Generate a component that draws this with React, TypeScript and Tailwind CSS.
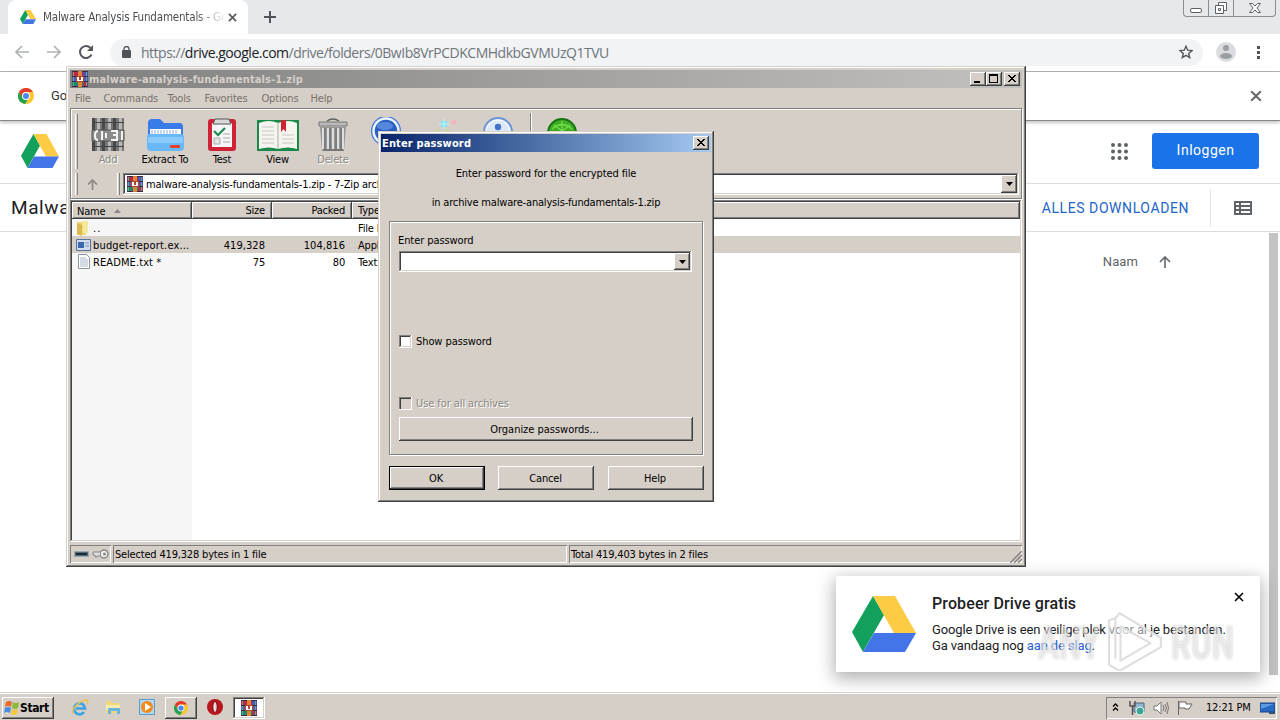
import type { ReactNode } from "react";

const ui = "font-['DejaVu_Sans_Condensed','DejaVu_Sans',sans-serif] [font-stretch:condensed] text-[11px] leading-[14px] tracking-[-0.18px] whitespace-nowrap";
const roboto = "font-['Roboto',sans-serif] whitespace-nowrap";
const frame = "bg-[#d6cfc8] shadow-[inset_-1px_-1px_#404040,inset_1px_1px_#d6cfc8,inset_-2px_-2px_#808080,inset_2px_2px_#fff]";
const raised = "bg-[#d6cfc8] shadow-[inset_-1px_-1px_#404040,inset_1px_1px_#fff,inset_-2px_-2px_#808080]";
const sunken = "bg-white shadow-[inset_-1px_-1px_#fff,inset_1px_1px_#808080,inset_-2px_-2px_#d6cfc8,inset_2px_2px_#404040]";
const thinSunken = "shadow-[inset_1px_1px_#808080,inset_-1px_-1px_#fff]";

function DriveLogo({ className }: { className: string }) {
  return (
    <svg className={className} viewBox="0 0 64 56" preserveAspectRatio="none">
      <path d="M21 0L0 36l11 20 21-37z" fill="#12a05c" />
      <path d="M21 0h22l21 37H42z" fill="#fdcc44" />
      <path d="M22 37h42L53 56H11z" fill="#4374e8" />
    </svg>
  );
}

function ChromeLogo({ className }: { className: string }) {
  return (
    <svg className={className} viewBox="0 0 16 16">
      <circle cx="8" cy="8" r="8" fill="#fbc62e" />
      <path d="M1.100 4A8 8 0 0 1 14.900 4H8a4 4 0 0 0-3.500 6z" fill="#e33b2e" />
      <path d="M1.100 4a8 8 0 0 0 6 12l3.400-6A4 4 0 0 1 4.500 10z" fill="#21a251" />
      <circle cx="8" cy="8" r="3.900" fill="#fff" />
      <circle cx="8" cy="8" r="3" fill="#4a87ee" />
    </svg>
  );
}

function RarIcon({ className }: { className: string }) {
  return (
    <svg className={className} viewBox="0 0 16 16" shapeRendering="crispEdges">
      <path d="M0 0h16v16H0z" fill="#3a2a4a" />
      <path d="M0 1h16v4H0z" fill="#b92846" />
      <path d="M11 1h5v4h-5z" fill="#4a54b8" />
      <path d="M0 6h16v4H0z" fill="#5558b4" />
      <path d="M0 11h16v4H0z" fill="#23866a" />
      <path d="M11 11h5v4h-5z" fill="#a8354c" />
      <path d="M1 1h1v4H1zM14 1h1v4h-1zM1 6h1v4H1zM14 6h1v4h-1zM1 11h1v4H1zM14 11h1v4h-1z" fill="#5fa88a" />
      <path d="M6 0h4v16H6z" fill="#df8434" />
      <path d="M4 5h8v6H4z" fill="#b0452c" />
      <path d="M5 6h2v3h2V6h2v4H5z" fill="#fff" />
    </svg>
  );
}

function Cross({ className, w = 1.5 }: { className: string; w?: number }) {
  return (
    <svg className={className} viewBox="0 0 10 10" stroke="currentColor" strokeWidth={w} fill="none">
      <path d="M1 1l8 8M9 1L1 9" />
    </svg>
  );
}

function CaptionButton({ children }: { children: ReactNode }) {
  return (
    <span className={`flex h-[14px] w-4 items-center justify-center ${raised}`}>
      <svg className="h-[14px] w-4" viewBox="0 0 16 14" shapeRendering="crispEdges">{children}</svg>
    </span>
  );
}

const closeGlyph = <path d="M4 3h2v1h1v1h2V4h1V3h2v1h-1v1h-1v1H9v1h1v1h1v1h1v1h-2V9H9V8H7v1H6v1H4V9h1V8h1V7h1V6H6V5H5V4H4z" />;

function DropArrow() {
  return (
    <span className={`flex h-full w-4 items-center justify-center ${raised}`}>
      <svg className="h-1 w-[7px]" viewBox="0 0 7 4"><path d="M0 0h7L3.500 4z" /></svg>
    </span>
  );
}

function BrowserChrome() {
  return (
    <>
      <div className="flex h-[34px] bg-[#e6e9ec] pl-2">
        <div className="flex h-full w-[240px] items-center rounded-t-lg bg-white pl-3">
          <DriveLogo className="h-[14px] w-4" />
          <span className={`${ui} ml-[7px] w-[180px] bg-gradient-to-r from-[#45494d] from-85% to-[#ddd] to-98% bg-clip-text !text-[11.5px] !tracking-[-0.18px] text-transparent`}>
            Malware Analysis Fundamentals - Go
          </span>
          <Cross className="ml-[5px] size-[9px] text-[#55595d]" w={1.8} />
        </div>
        <svg className="mt-[11px] ml-4 size-3" viewBox="0 0 12 12" stroke="#505458" strokeWidth="2"><path d="M6 0v12M0 6h12" /></svg>
        <div className="mr-1 ml-auto flex h-[17px] w-[93px] rounded-b border border-t-0 border-[#8b8e91] text-[#5b6064]">
          <span className="flex w-[25px] justify-center border-r border-[#8b8e91]">
            <svg className="mt-2 h-[5px] w-3" viewBox="0 0 12 5"><rect x=".5" y=".5" width="11" height="4" rx="1.500" fill="#fff" stroke="currentColor" /></svg>
          </span>
          <span className="flex w-[25px] justify-center border-r border-[#8b8e91]">
            <svg className="mt-[2px] size-3" viewBox="0 0 12 12" fill="#fff" stroke="currentColor"><path d="M3.500.500h8v8h-8z" /><path d="M.500 3.500h8v8h-8zM3.500 6.500h2v2h-2z" /></svg>
          </span>
          <span className="flex flex-1 justify-center">
            <svg className="mt-[3px] h-[10px] w-3" viewBox="0 0 12 10" fill="#fff" stroke="currentColor"><path d="M.500.500h3L6 3l2.500-2.500h3L8 5l3.500 4.500h-3L6 7 3.500 9.500h-3L4 5z" /></svg>
          </span>
        </div>
      </div>
      <div className="flex h-[38px] items-center border-b border-[#b0b0b0] bg-white pb-[1px]">
        <svg className="ml-[15px] h-[14px] w-[14px]" viewBox="0 0 14 14" fill="none" stroke="#aeb1b4" strokeWidth="1.700"><path d="M14 7H1M7 1L1 7l6 6" /></svg>
        <svg className="ml-[18px] h-[14px] w-[14px]" viewBox="0 0 14 14" fill="none" stroke="#aeb1b4" strokeWidth="1.700"><path d="M0 7h13M7 1l6 6-6 6" /></svg>
        <svg className="ml-[18px] h-[14px] w-[14px]" viewBox="0 0 14 14" fill="none" stroke="#55595d" strokeWidth="2"><path d="M12.500 9.500A6 6 0 1 1 11.500 3" /><path d="M14 0v6H8z" fill="#55595d" stroke="none" /></svg>
        <div className="ml-[17px] flex h-[27px] w-[1093px] items-center rounded-full bg-[#f1f3f5] pl-3">
          <svg className="h-3 w-[9px]" viewBox="0 0 9 12" fill="#505458"><rect y="4" width="9" height="8" rx="1" /><path d="M2 5V3a2.500 2.500 0 0 1 5 0v2" fill="none" stroke="#505458" strokeWidth="1.300" /></svg>
          <span className="ml-[10px] font-['Open_Sans',sans-serif] text-[14px] tracking-[-0.49px] whitespace-nowrap text-[#70757a]">
            https://<span className="text-[#202124]">drive.google.com</span>/drive/folders/0BwIb8VrPCDKCMHdkbGVMUzQ1TVU
          </span>
          <svg className="mr-[10px] ml-auto size-[14px]" viewBox="0 0 14 14" fill="none" stroke="#55595d" strokeWidth="1.400"><path d="M7 1.200l1.700 4 4.300.400-3.300 2.800 1 4.200L7 10.400l-3.700 2.200 1-4.200L1 5.600l4.300-.400z" /></svg>
        </div>
        <svg className="ml-[13px] size-5" viewBox="0 0 20 20"><circle cx="10" cy="10" r="10" fill="#dadce0" /><circle cx="10" cy="6" r="3" fill="#9a9da1" /><ellipse cx="10" cy="14" rx="6" ry="3" fill="#9a9da1" /></svg>
        <svg className="ml-[21px] h-[13px] w-[3px]" viewBox="0 0 3 13" fill="#505458"><path d="M0 0h3v3H0zM0 5h3v3H0zM0 10h3v3H0z" /></svg>
      </div>
      <div className="z-10 flex h-[49px] items-center border-b border-[#888] bg-white pl-[18px] shadow-[0_2px_3px_rgba(0,0,0,.22)]">
        <ChromeLogo className="size-4" />
        <span className={`${roboto} ml-[17px] text-[13px] text-[#333]`}>Go</span>
        <Cross className="mr-[18px] ml-auto size-[12px] text-[#65696d]" w={1.7} />
      </div>
    </>
  );
}

function DrivePage() {
  return (
    <div className={`flex flex-1 flex-col bg-white ${roboto}`}>
      <div className="flex h-[63px] items-center border-b border-[#dcdcdc] pb-[2px] pl-[21px]">
        <DriveLogo className="h-[34px] w-[38px]" />
        <svg className="mr-6 ml-auto size-[17px]" viewBox="0 0 17 17" fill="#5f6368">
          {[2, 8.5, 15].map((y) => [2, 8.5, 15].map((x) => <circle key={`${x}-${y}`} cx={x} cy={y} r="2" />))}
        </svg>
        <button className="mr-[21px] h-9 w-[107px] rounded-[3px] bg-[#1a73e8] pb-[1px] text-[14px] tracking-[0.5px] text-white">Inloggen</button>
      </div>
      <div className="flex h-12 items-center border-b border-[#dcdcdc] pl-[11px]">
        <span className="pt-[2px] text-[19px] tracking-[0.6px] text-[#202124]">Malwa</span>
        <span className="mr-[21px] ml-auto pt-[2px] text-[14px] tracking-[0.58px] text-[#2165c9]">ALLES DOWNLOADEN</span>
        <span className="flex h-[38px] w-[70px] items-center border-l border-[#e3e3e3] pl-[23px]">
          <svg className="h-[14px] w-[18px]" viewBox="0 0 18 14" shapeRendering="crispEdges" fill="none" stroke="#606468" strokeWidth="2"><path d="M1 1h16v12H1zM6 1v12M1 5h16M1 9h16" /></svg>
        </span>
      </div>
      <div className="flex flex-1 justify-end">
        <div className="mt-[23px] mr-[98px] flex h-[14px] items-center">
          <span className="text-[13px] tracking-[0.1px] text-[#5f6368]">Naam</span>
          <svg className="ml-[21px] size-3" viewBox="0 0 12 12" fill="none" stroke="#606468" strokeWidth="1.600"><path d="M6 12V1M1 6l5-5 5 5" /></svg>
        </div>
        <div className="mt-[1px] mr-[2px] mb-[17px] w-[9px] bg-[#c3c3c3]" />
      </div>
    </div>
  );
}

function Tool({ label, className, disabled, children }: { label?: string; className: string; disabled?: boolean; children: ReactNode }) {
  return (
    <div className={`mt-1 flex flex-col items-center ${className}`}>
      <svg className="h-[36px] w-[44px]" viewBox="0 0 44 36">{children}</svg>
      {label && <span className={disabled ? "text-[#8b8781] [text-shadow:1px_1px_#fff]" : "text-black"}>{label}</span>}
    </div>
  );
}

function Toolbar() {
  return (
    <div className="flex h-[61px] items-start pt-1 pl-1">
      <span className="mt-[1px] h-[55px] w-[3px] border-r border-l border-r-[#808080] border-l-white" />
      <Tool label="Add" disabled className="ml-[2px] w-[56px]">
        <path d="M6 1h32v33H6z" fill="#777" />
        <path d="M6 1h3v33H6zM16 1h3v33h-3zM27 1h3v33h-3z" fill="#484848" />
        <path d="M11 1h3v33h-3zM22 1h3v33h-3zM33 1h3v33h-3z" fill="#b8b8b8" />
        <path d="M6 5h32v1H6zM6 29h32v1H6z" fill="#444" />
        <path d="M6 13h32v11H6z" fill="#8b8b8b" stroke="#555" />
        <path d="M12 14c-4 0-4 9 0 9M16 14v9M20 16v5M25 14h6v9h-6M27 18h4M36 14v9" fill="none" stroke="#f4f4f4" strokeWidth="2" />
      </Tool>
      <Tool label="Extract To" className="w-[58px]">
        <path d="M5 6q0-4 4-4h8l4 4h16q3 0 3 4v10H5z" fill="#397be8" />
        <path d="M7 12h31v12H7z" fill="#fff" />
        <path d="M9 13v4m3-4v4m3-4v4m3-4v4m3-4v4m3-4v4m3-4v4m3-4v4m3-4v4" stroke="#8bb0e0" />
        <path d="M4 20q0-3 3-3h30q4 0 4 3v10q0 4-4 4H8q-4 0-4-4z" fill="#69b8fa" />
        <path d="M5 20h35v6H5z" fill="#a2d5ff" opacity=".6" />
        <rect x="27" y="28" width="10" height="3" rx="1" fill="#e24027" />
      </Tool>
      <Tool label="Test" className="w-[56px]">
        <rect x="8" y="2" width="28" height="32" rx="3" fill="#cf2237" />
        <path d="M12 6h20v24H12z" fill="#f6f6f6" />
        <path d="M15 2h14l2 5H13z" fill="#d9d9d9" stroke="#555" />
        <path d="M14 14l4 4 7-7" fill="none" stroke="#1d8a51" strokeWidth="2.200" />
        <path d="M14 21h6v6h-6z" fill="#e5e5e5" stroke="#aaa" />
        <path d="M23 17h7M23 21h7M23 25h7" stroke="#aaa" strokeWidth="1.200" />
      </Tool>
      <Tool label="View" className="w-[55px]">
        <path d="M1 3h42v31H1z" fill="#19894a" />
        <path d="M3 6q10-4 19 0v26q-9-3-19 0zM22 6q10-4 19 0v26q-9-3-19 0z" fill="#f6f4ee" />
        <path d="M6 10h12M6 14h12M6 18h12M6 22h12M6 26h12M26 18h12M26 22h12M26 26h12" stroke="#c7c7c7" />
        <path d="M22 5v27" stroke="#a5ad9c" />
        <path d="M25 3h5v12l-2.500-3-2.500 3z" fill="#d02435" />
      </Tool>
      <Tool label="Delete" disabled className="w-[56px]">
        <path d="M9 10h26l-2 24H11z" fill="#979797" />
        <path d="M12 11v21M17 11v22M22 11v22M27 11v22M32 11v21" stroke="#dedede" strokeWidth="2" />
        <path d="M14 11v22M19 11v22M25 11v22M30 11v22" stroke="#636363" />
        <path d="M8 5h28v4H8z" fill="#bbb" stroke="#777" />
        <path d="M16 4q6-4 12 0" fill="none" stroke="#606060" strokeWidth="1.500" />
        <path d="M12 33h20" stroke="#777" strokeWidth="2" />
      </Tool>
      <Tool className="ml-[-3px] w-[56px]">
        <circle cx="22" cy="14" r="15" fill="#3f74d2" />
        <circle cx="22" cy="14" r="12.500" fill="#2b61c2" stroke="#eef5ff" strokeWidth="2.500" />
        <ellipse cx="21" cy="9" rx="8" ry="4" fill="#5587dd" />
      </Tool>
      <Tool className="w-[56px]">
        <circle cx="24" cy="7" r="3.500" fill="#7fe3f4" /><path d="M24 2v10M19 7h10" stroke="#c9f4f8" />
        <circle cx="34" cy="5" r="2.500" fill="#f1b5bd" />
        <path d="M13 15l5-3 2 3zM25 13h4v3h-4z" fill="#a9e577" />
      </Tool>
      <Tool className="w-[56px]">
        <circle cx="22" cy="15" r="14" fill="#dce7f8" stroke="#6f94d6" strokeWidth="2" />
        <circle cx="22" cy="15" r="12" fill="none" stroke="#fff" />
        <circle cx="22" cy="10" r="3.200" fill="#4472c8" />
      </Tool>
      <span className="ml-[4px] h-[54px] w-[2px] border-r border-l border-r-white border-l-[#808080]" />
      <Tool className="ml-[2px] w-[56px]">
        <circle cx="22" cy="16" r="14" fill="#3fae26" stroke="#13750f" strokeWidth="2" />
        <path d="M22 4v20M14 8l16 12M30 8L14 20M12 12q10-9 20 0" fill="none" stroke="#74e04a" strokeWidth="1.200" />
      </Tool>
    </div>
  );
}

const cols = "grid grid-cols-[120px_80px_80px_1fr]";
const cell = "pt-[2px] pr-[7px] text-right";

function ArchiveWindow() {
  return (
    <div className={`absolute top-[66px] left-[66px] z-20 flex h-[501px] w-[960px] flex-col p-1 ${frame} ${ui}`}>
      <div className="flex h-[18px] items-center bg-gradient-to-r from-[#808080] to-[#c3c1be] pr-[2px] pl-[2px]">
        <RarIcon className="size-4" />
        <span className="ml-[1px] pt-[1px] font-bold tracking-[0.13px] text-[#d6cfc8]">malware-analysis-fundamentals-1.zip</span>
        <span className="ml-auto" />
        <CaptionButton><path d="M4 9h6v2H4z" /></CaptionButton>
        <CaptionButton><path d="M3 2h9v9H3zM4 4v6h7V4z" fillRule="evenodd" /></CaptionButton>
        <span className="w-[2px]" />
        <CaptionButton>{closeGlyph}</CaptionButton>
      </div>
      <div className="flex h-[20px] items-center pt-[2px] pl-[5px] text-[#77716b]">
        <span className="w-[28.500px]">File</span>
        <span className="w-[64px]">Commands</span>
        <span className="w-[37px]">Tools</span>
        <span className="w-[57px]">Favorites</span>
        <span className="w-[49px]">Options</span>
        <span>Help</span>
      </div>
      <div className="flex h-[91px] w-full flex-col border border-[#808080] shadow-[inset_1px_1px_#fff,1px_1px_#fff]">
        <Toolbar />
        <div className="flex h-[28px] items-center pl-1">
          <span className="h-[22px] w-[3px] border-r border-l border-r-[#808080] border-l-white" />
          <svg className="ml-[9px] size-[11px]" viewBox="0 0 11 11" fill="none" stroke="#8c8883" strokeWidth="1.700"><path d="M5.500 11V1M1 5.500L5.500 1 10 5.500" /></svg>
          <span className="ml-[19px] h-[22px] w-[3px] border-r border-l border-r-[#808080] border-l-white" />
          <div className={`mr-[2px] ml-[3px] flex h-[22px] flex-1 items-center py-[2px] pr-[2px] pl-1 ${sunken}`}>
            <RarIcon className="size-4" />
            <span className="ml-[3px] flex-1 pt-[1px]">malware-analysis-fundamentals-1.zip - 7-Zip arch</span>
            <DropArrow />
          </div>
        </div>
      </div>
      <div className={`mt-[1px] flex h-[342px] flex-col p-[2px] ${sunken}`}>
        <div className={`h-[17px] ${cols} bg-[#d6cfc8]`}>
          <span className={`flex items-center pt-[2px] pl-[5px] ${raised}`}>
            Name
            <svg className="mb-[1px] ml-[9px] h-1 w-[7px]" viewBox="0 0 7 4" fill="#888"><path d="M0 4h7L3.500 0z" /></svg>
          </span>
          <span className={`${cell} ${raised}`}>Size</span>
          <span className={`${cell} ${raised}`}>Packed</span>
          <span className={`pt-[2px] pl-[6px] ${raised}`}>Type</span>
        </div>
        <div className={`h-[17px] items-center ${cols}`}>
          <span className="flex h-full items-center bg-[#f6f6f6] pl-1">
            <svg className="h-4 w-[14px]" viewBox="0 0 14 16"><path d="M1 2h8l1 13H1z" fill="#eed775" /><path d="M6 1h6v12H7z" fill="#f7e99a" /><path d="M1 3l5 2v11l-5-2z" fill="#dcb94c" /></svg>
            <span className="ml-[3px] pt-[2px] tracking-[1px]">..</span>
          </span>
          <span /><span />
          <span className="pt-[2px] pl-[6px]">File F</span>
        </div>
        <div className={`h-[17px] items-center bg-[#d6cfc8] ${cols}`}>
          <span className="flex items-center pl-1">
            <svg className="h-3 w-[15px]" viewBox="0 0 15 12"><path d="M.500.500h14v11H.500z" fill="#cfdcee" stroke="#56729b" /><path d="M2 3h6v6H2z" fill="#3768ab" /><path d="M9 4h4M9 7h4" stroke="#7893b9" /></svg>
            <span className="ml-[2px] pt-[2px] tracking-[0.17px]">budget-report.ex...</span>
          </span>
          <span className={`${cell} tracking-[0.05px]`}>419,328</span>
          <span className={`${cell} tracking-[0.05px]`}>104,816</span>
          <span className="pt-[2px] pl-[6px]">Appl</span>
        </div>
        <div className={`h-[17px] items-center ${cols}`}>
          <span className="flex h-full items-center bg-[#f6f6f6] pl-[6px]">
            <svg className="h-[15px] w-3" viewBox="0 0 12 15"><path d="M.500.500h8l3 3v11H.500z" fill="#fff" stroke="#8b96a0" /><path d="M2 4h6M2 6h8M2 8h8M2 10h8M2 12h8" stroke="#a5b8c8" /></svg>
            <span className="ml-[3px] pt-[2px] tracking-[0.1px]">README.txt *</span>
          </span>
          <span className={cell}>75</span>
          <span className={cell}>80</span>
          <span className="pt-[2px] pl-[6px]">Text</span>
        </div>
        <div className="w-[120px] flex-1 bg-[#f6f6f6]" />
      </div>
      <div className="mt-[3px] flex h-[18px] gap-[2px]">
        <span className={`flex w-[41px] items-center pl-1 ${thinSunken}`}>
          <svg className="h-3 w-[36px]" viewBox="0 0 36 12"><path d="M.500 3.500h14v5H.500z" fill="#526a78" stroke="#9aa8ae" /><path d="M2 6h11" stroke="#1a2c38" strokeWidth="2" /><circle cx="30" cy="6" r="4" fill="#eee" stroke="#888" strokeWidth="1.500" /><circle cx="30.500" cy="6" r="1.500" fill="#888" /><path d="M26 4h-7v3h2v2h2V8h3" fill="#ddd" stroke="#888" /></svg>
        </span>
        <span className={`flex w-[454px] items-center pt-[1px] pl-[2px] ${thinSunken}`}>Selected 419,328 bytes in 1 file</span>
        <span className={`flex flex-1 items-center pt-[1px] pl-[2px] ${thinSunken}`}>
          Total 419,403 bytes in 2 files
          <svg className="mt-auto ml-auto size-3" viewBox="0 0 12 12" stroke="#808080" strokeWidth="1.400"><path d="M0 12L12 0M4 12l8-8M8 12l4-4" /></svg>
        </span>
      </div>
    </div>
  );
}

function PasswordDialog() {
  return (
    <div className={`absolute top-[131px] left-[378px] z-30 flex h-[371px] w-[336px] flex-col p-[3px] ${frame} ${ui}`}>
      <div className="flex h-[18px] items-center bg-gradient-to-r from-[#0a246a] to-[#a6caf0] pr-[2px] pl-[1px]">
        <span className="flex-1 pt-[1px] font-bold tracking-[0.15px] text-white">Enter password</span>
        <CaptionButton>{closeGlyph}</CaptionButton>
      </div>
      <p className="mt-[15px] text-center tracking-[-0.1px]">Enter password for the encrypted file</p>
      <p className="mt-[15px] text-center">in archive malware-analysis-fundamentals-1.zip</p>
      <div className="mt-[11px] ml-[8px] flex h-[234px] w-[314px] flex-col border border-[#808080] pl-[9px] shadow-[inset_1px_1px_#fff,1px_1px_#fff]">
        <span className="mt-[12px] ml-[-1px] tracking-[-0.08px]">Enter password</span>
        <div className={`mt-[3px] flex h-[21px] w-[293px] justify-end p-[2px] ${sunken}`}>
          <DropArrow />
        </div>
        <label className="mt-[62px] flex h-[15px] items-center gap-[4px] tracking-[-0.08px]">
          <span className={`size-[13px] ${sunken}`} /><span className="pt-[1px]">Show password</span>
        </label>
        <label className="mt-[47px] flex h-[15px] items-center gap-[4px] tracking-[-0.08px] text-[#8b8781] [text-shadow:1px_1px_#fff]">
          <span className="size-[13px] bg-[#d6cfc8] shadow-[inset_-1px_-1px_#fff,inset_1px_1px_#808080,inset_2px_2px_#404040]" /><span className="pt-[1px]">Use for all archives</span>
        </label>
        <button className={`mt-[6px] h-[24px] w-[294px] pt-[1px] pr-[3px] tracking-[-0.02px] ${raised}`}>Organize passwords...</button>
      </div>
      <div className="mt-[11px] ml-2 flex">
        <button className={`h-6 w-24 border border-black pt-[1px] pr-[2px] ${raised}`}>OK</button>
        <button className={`ml-[13px] h-6 w-24 pt-[1px] pr-[1px] ${raised}`}>Cancel</button>
        <button className={`ml-[14px] h-6 w-24 pt-[1px] pr-[2px] ${raised}`}>Help</button>
      </div>
    </div>
  );
}

function DriveToast() {
  return (
    <div className={`absolute top-[576px] left-[836px] flex h-24 w-[424px] bg-white shadow-[0_5px_16px_2px_rgba(0,0,0,.3)] ${roboto}`}>
      <DriveLogo className="mt-5 ml-4 h-14 w-16" />
      <div className="ml-4 flex flex-col pt-[18px] text-[#202124]">
        <span className="text-[16px] leading-[20px] font-medium tracking-[0.12px]">Probeer Drive gratis</span>
        <span className="mt-[8px] text-[13px] leading-4 tracking-[-0.13px]">Google Drive is een veilige plek voor al je bestanden.</span>
        <span className="text-[13px] leading-4 tracking-[-0.13px]">Ga vandaag nog <span className="text-[#2a62cf]">aan de slag</span>.</span>
      </div>
      <Cross className="absolute top-4 right-4 size-[10px] text-black" w={1.600} />
      <div className="absolute top-[37px] left-[202px] flex h-[60px] w-[198px] items-center justify-between text-[46px] leading-none font-bold text-white/55 [text-shadow:0_0_3px_rgba(0,0,0,.22)]">
        <span className="w-[61px] origin-left scale-x-[0.68]">ANY</span>
        <svg className="mt-[-4px] size-[60px]" viewBox="0 0 58 58" fill="rgba(255,255,255,.5)" stroke="#dedede" strokeWidth="2" strokeLinejoin="round">
          <path d="M14 2l40 24v9L14 58 4 52V9L10 7z" />
          <path d="M15 15l29 16-29 17z" /><path d="M10 7v39" />
        </svg>
        <span className="w-[65px] origin-left scale-x-[0.68]">RUN</span>
      </div>
    </div>
  );
}

function Taskbar() {
  return (
    <div className={`z-30 flex h-[28px] items-center border-t border-[#d6cfc8] bg-[#d6cfc8] shadow-[inset_0_1px_#fff] ${ui}`}>
      <button className={`mt-[2px] ml-[2px] flex h-[22px] w-[52px] items-center pl-[2px] ${raised}`}>
        <svg className="size-4" viewBox="0 0 16 16"><path d="M2 2q3-2 6 0L7 7Q4 5 1 7z" fill="#e56b2c" /><path d="M9 2q3 2 6 0l-1 6q-3 2-6 0z" fill="#87bc3a" /><path d="M1 8q3-2 6 0l-1 5q-3-2-6 0z" fill="#468fdf" /><path d="M8 9q3 2 6 0l-1 5q-3 2-6 0z" fill="#f7c73b" /></svg>
        <span className="text-[12px] font-bold tracking-[-0.4px]">Start</span>
      </button>
      <svg className="mt-[1px] ml-[17px] size-[18px]" viewBox="0 0 18 18" fill="none"><path d="M13 14A5.500 5.500 0 1 1 14 10.500H5" stroke="#3da4e5" strokeWidth="2.700" /><path d="M2 16C-1 12 9 2 16 2q2 1 0 4" stroke="#e9c64b" strokeWidth="1.500" /></svg>
      <svg className="mt-[1px] ml-[16px] h-4 w-[17px]" viewBox="0 0 17 16"><path d="M1 2h5l1 2h8v10H1z" fill="#f2d67b" /><path d="M1 6h14v5H1z" fill="#f9ebac" /><path d="M3 9h12v6h-3v-3H6v3H3z" fill="#66b6df" /></svg>
      <svg className="mt-[1px] ml-[17px] size-4" viewBox="0 0 16 16"><path d="M.500.500h15v15H.500z" fill="#b6d7f0" stroke="#579cd2" /><circle cx="8" cy="8" r="6" fill="#f28a1a" /><path d="M6 4l6 4-6 4z" fill="#fff" /></svg>
      <span className={`mt-[2px] ml-[10px] flex h-[22px] w-8 items-center justify-center ${raised}`}><ChromeLogo className="size-[14px]" /></span>
      <svg className="mt-[1px] ml-[10px] size-4" viewBox="0 0 16 16"><circle cx="8" cy="8" r="8" fill="#b8151d" /><ellipse cx="8" cy="8" rx="2.200" ry="5.500" fill="#eddada" stroke="#7a080e" /></svg>
      <span className={`mt-[2px] ml-[10px] flex h-[22px] w-8 items-center justify-center ${sunken}`}><RarIcon className="size-4" /></span>
      <div className={`mt-[2px] mr-[3px] ml-auto flex h-[22px] w-[171px] items-center ${thinSunken}`}>
        <svg className="mb-[2px] ml-[6px] h-[8px] w-[7px]" viewBox="0 0 7 8" fill="none" stroke="#000" strokeWidth="1.300"><path d="M1 3.500L3.500 1 6 3.500M1 7.500L3.500 5 6 7.500" /></svg>
        <svg className="ml-[10px] size-4" viewBox="0 0 16 16"><path d="M5 3h10v9H5z" fill="#8fb7d1" stroke="#506673" /><path d="M1 1v5h5V1M3.500 6v9" fill="none" stroke="#555" strokeWidth="1.500" /><circle cx="11" cy="11" r="4" fill="#3ca596" stroke="#e3f2ee" /></svg>
        <svg className="ml-[8px] h-[14px] w-4" viewBox="0 0 16 14" fill="#fff" stroke="#777"><path d="M1 5h3l4-4v12L4 9H1z" /><path d="M10 4q2 3 0 6M12 3q3 4 0 8M14 1q3 6 0 12" fill="none" /></svg>
        <svg className="ml-[8px] size-4" viewBox="0 0 16 16" fill="#fff" stroke="#666"><path d="M1.500 1v14" /><path d="M2 2h7v2h6l-3 5H8V8H2z" /></svg>
        <span className="ml-[13px]">12:21 PM</span>
        <svg className="ml-auto mr-[2px] h-3 w-[15px]" viewBox="0 0 15 12"><path d="M0 1h15v9H0z" fill="#2568c2" stroke="#174384" /><path d="M1 2h13L1 7z" fill="#5f9ae5" /><path d="M9 10h6v2H9z" fill="#304e76" /></svg>
      </div>
    </div>
  );
}

export default function App() {
  return (
    <div className="relative flex h-[720px] w-[1280px] flex-col overflow-hidden bg-white text-black">
      <BrowserChrome />
      <DrivePage />
      <ArchiveWindow />
      <DriveToast />
      <PasswordDialog />
      <Taskbar />
    </div>
  );
}
